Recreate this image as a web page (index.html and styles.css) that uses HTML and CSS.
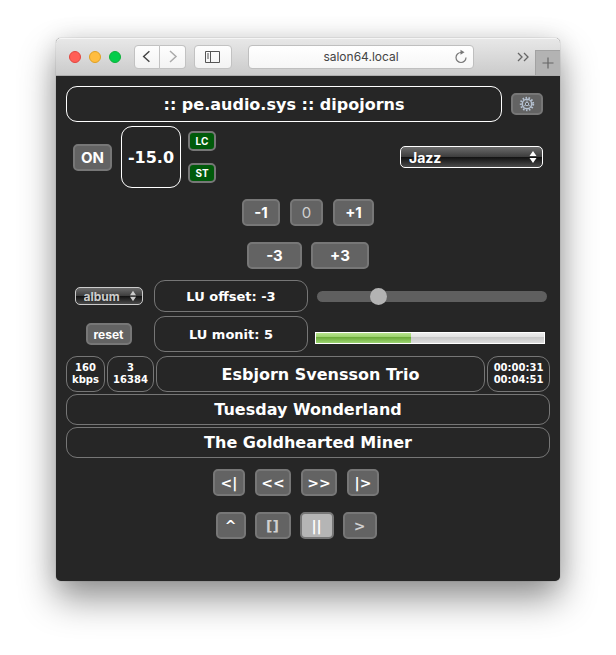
FILE: index.html
```html
<!DOCTYPE html>
<html lang="en">
<head>
<meta charset="utf-8">
<meta name="viewport" content="width=device-width, initial-scale=1">
<title>pe.audio.sys</title>
<link rel="stylesheet" href="styles.css">
</head>
<body>
<div class="window">
  <header class="toolbar">
    <div class="lights">
      <span class="light light-close"></span>
      <span class="light light-min"></span>
      <span class="light light-max"></span>
    </div>
    <div class="nav">
      <button class="chrome-btn nav-back" aria-label="Back"><svg width="25" height="21" viewBox="0 0 25 21"><path d="M15 5l-6 5.500 6 5.500" fill="none" stroke="#444" stroke-width="1.500"/></svg></button>
      <button class="chrome-btn nav-fwd" aria-label="Forward"><svg width="25" height="21" viewBox="0 0 25 21"><path d="M10 5l6 5.500-6 5.500" fill="none" stroke="#aaa" stroke-width="1.500"/></svg></button>
    </div>
    <button class="chrome-btn sidebar-btn" aria-label="Sidebar"><svg width="16" height="12" viewBox="0 0 16 12"><path d="M.5.500h14v11H.5zM5.500.500v11M2 3h2M2 5h2M2 7h2" fill="none" stroke="#555"/></svg></button>
    <div class="address">
      <input class="address-input" type="text" value="salon64.local" aria-label="Address">
      <button class="reload" aria-label="Reload"><svg width="14" height="15" viewBox="0 0 14 15"><path d="M7 3.500A5 5 0 1 0 12 8.500" fill="none" stroke="#777" stroke-width="1.200"/><path d="M6.500.800v5L10.500 3.300z" fill="#777"/></svg></button>
    </div>
    <button class="more" aria-label="More"><svg width="13" height="10" viewBox="0 0 13 10"><path d="M1 1l4 4-4 4M7 1l4 4-4 4" fill="none" stroke="#666" stroke-width="1.300"/></svg></button>
    <button class="new-tab" aria-label="New tab"><svg width="12" height="12" viewBox="0 0 12 12"><path d="M6 .5v11M.5 6h11" stroke="#666" stroke-width="1.200"/></svg></button>
  </header>

  <main class="panel">
    <div class="title-row">
      <h1 class="box title">:: pe.audio.sys :: dipojorns</h1>
      <button class="btn gear" aria-label="Settings"><svg width="16" height="16" viewBox="0 0 16 16"><circle cx="8" cy="8" r="6.200" fill="none" stroke="#b4c0d0" stroke-width="2" stroke-dasharray="1.500 1.500"/><circle cx="8" cy="8" r="4.700" fill="none" stroke="#b4c0d0" stroke-width="1.500"/><circle cx="8" cy="8" r="1.700" fill="#555" stroke="#b4c0d0"/><path d="M8 3.500v3M4.200 10.500l2.500-1.500M11.800 10.500L9.300 9" stroke="#b4c0d0" stroke-width=".8"/></svg></button>
    </div>

    <div class="main-row">
      <button class="btn power">ON</button>
      <div class="box volume">-15.0</div>
      <div class="flags">
        <button class="btn flag">LC</button>
        <button class="btn flag">ST</button>
      </div>
      <div class="select-wrap target">
        <select class="select" aria-label="Preset"><option>Jazz</option></select>
        <svg class="arrows" width="8" height="14" viewBox="0 0 8 14"><path d="M4 1l3.500 5h-7zM4 13L.5 8h7z" fill="#fff"/></svg>
      </div>
    </div>

    <div class="btn-row small-steps">
      <button class="btn w38">-1</button>
      <button class="btn w33 dim zero">0</button>
      <button class="btn w41">+1</button>
    </div>
    <div class="btn-row big-steps">
      <button class="btn w55">-3</button>
      <button class="btn w58">+3</button>
    </div>

    <div class="loudness">
      <div class="select-wrap scope">
        <select class="select" aria-label="Loudness scope"><option>album</option></select>
        <svg class="arrows" width="8" height="12" viewBox="0 0 8 14"><path d="M4 1l3.500 5h-7zM4 13L.5 8h7z" fill="#ccc"/></svg>
      </div>
      <label class="box lu" for="offset">LU offset: -3</label>
      <input class="slider" id="offset" type="range" min="0" max="12" value="3">
      <button class="btn reset">reset</button>
      <div class="box lu lu-monit">LU monit: 5</div>
      <div class="meter" role="meter" aria-label="LU monit" aria-valuemin="0" aria-valuemax="12" aria-valuenow="5"><div class="meter-fill" style="width: 41.6%"></div></div>
    </div>

    <div class="track">
      <div class="box info">160<br>kbps</div>
      <div class="box info">3<br>16384</div>
      <div class="box artist">Esbjorn Svensson Trio</div>
      <div class="box info">00:00:31<br>00:04:51</div>
      <div class="box wide">Tuesday Wonderland</div>
      <div class="box wide">The Goldhearted Miner</div>
    </div>

    <div class="btn-row transport">
      <button class="btn glyph w32">&lt;|</button>
      <button class="btn glyph w36">&lt;&lt;</button>
      <button class="btn glyph w36">&gt;&gt;</button>
      <button class="btn glyph w32">|&gt;</button>
    </div>
    <div class="btn-row transport transport-modes">
      <button class="btn glyph w30">^</button>
      <button class="btn glyph w36 dim">[]</button>
      <button class="btn glyph w34 active">||</button>
      <button class="btn glyph w34 dim">&gt;</button>
    </div>
  </main>
</div>
</body>
</html>
```
FILE: styles.css
```css
* {
  box-sizing: border-box;
}

body {
  margin: 0;
  padding: 38px 56px 74px;
  background: #fff;
  color: #fff;
  font-family: "DejaVu Sans", Verdana, sans-serif;
  font-weight: bold;
}

button,
input,
select {
  margin: 0;
  padding: 0;
  font: inherit;
}

svg {
  display: block;
}

.window {
  border-radius: 5px;
  background: #262626;
  box-shadow: 0 0 1px rgba(0, 0, 0, 0.5), 0 18px 36px rgba(0, 0, 0, 0.42), 0 0 24px rgba(0, 0, 0, 0.1);
}

/* Browser toolbar */
.toolbar {
  display: flex;
  align-items: center;
  height: 38px;
  padding-left: 13px;
  border-bottom: 1px solid #adadad;
  border-radius: 5px 5px 0 0;
  background: linear-gradient(#e8e8e8, #cbcbcb);
  box-shadow: inset 0 1px #f5f5f5;
}

.lights {
  display: flex;
  gap: 8px;
}

.light {
  width: 12px;
  height: 12px;
  border: 1px solid #e2463f;
  border-radius: 50%;
  background: #ff5f57;
}

.light-min {
  border-color: #dfa023;
  background: #ffbd3f;
}

.light-max {
  border-color: #0eb03a;
  background: #04cd4b;
}

.nav {
  display: flex;
  margin-left: 13px;
}

.chrome-btn {
  display: flex;
  flex: none;
  align-items: center;
  justify-content: center;
  height: 24px;
  border: 1px solid #c2c2c2;
  border-radius: 4px;
  background: linear-gradient(#fefefe, #f3f3f3);
}

.nav-back {
  width: 26px;
  border-radius: 4px 0 0 4px;
}

.nav-fwd {
  width: 26px;
  border-left: 0;
  border-radius: 0 4px 4px 0;
}

.sidebar-btn {
  width: 38px;
  margin-left: 8px;
}

.address {
  display: flex;
  flex: 1 1 0;
  align-items: center;
  min-width: 0;
  height: 24px;
  margin-left: 16px;
  padding: 0 5px 0 19px;
  border: 1px solid #bfbfbf;
  border-radius: 4px;
  background: linear-gradient(#fff, #f6f6f6);
}

.address-input {
  flex: 1;
  min-width: 0;
  border: 0;
  background: none;
  color: #444;
  font: 12px Inter, sans-serif;
  text-align: center;
}

.reload,
.more {
  flex: none;
  border: 0;
  background: none;
}

.more {
  margin: 0 5px 0 43px;
}

.new-tab {
  display: flex;
  flex: none;
  align-self: flex-end;
  align-items: center;
  justify-content: center;
  width: 25px;
  height: 25px;
  border: 1px solid #a2a2a2;
  border-width: 1px 0 0 1px;
  background: #b3b3b3;
}

/* Control panel */
.panel {
  padding: 10px 10px 42px;
}

.box {
  display: flex;
  align-items: center;
  justify-content: center;
  margin: 0;
  border: 1px solid #767676;
  border-radius: 11px;
  text-align: center;
}

.btn {
  display: flex;
  align-items: center;
  justify-content: center;
  height: 27px;
  border: 2px solid #777;
  border-radius: 5px;
  background: #636363;
  color: #fff;
  font: bold 15px Inter, sans-serif;
}

.title-row {
  display: flex;
  align-items: center;
  gap: 9px;
  padding-right: 7px;
}

.title {
  flex: 1;
  height: 36px;
  border-color: #fff;
  font-size: 16px;
}

.gear {
  width: 32px;
  height: 22px;
}

.main-row {
  display: flex;
  align-items: center;
  margin-top: 4px;
  padding: 0 7px;
}

.power {
  width: 39px;
}

.volume {
  width: 60px;
  height: 62px;
  margin: 0 7px 0 9px;
  border-color: #fff;
  font-size: 16px;
}

.flags {
  display: flex;
  flex-direction: column;
  gap: 12px;
}

.flag {
  width: 28px;
  height: 20px;
  background: #005a0a;
  font-size: 10px;
}

.select-wrap {
  position: relative;
}

.select {
  display: block;
  width: 100%;
  height: 22px;
  padding-left: 8px;
  border: 1px solid #fff;
  border-radius: 5px;
  appearance: none;
  background: linear-gradient(#6b6b6b, #3c3c3c 50%, #111 50%, #4a4a4a);
  color: #fff;
  font: bold 14px Inter, sans-serif;
}

.arrows {
  position: absolute;
  top: 4px;
  right: 6px;
  pointer-events: none;
}

.target {
  width: 143px;
  margin-left: auto;
}

.btn-row {
  display: flex;
  justify-content: center;
  gap: 10px;
}

.small-steps {
  margin-top: 11px;
}

.big-steps {
  gap: 9px;
  margin-top: 16px;
}

.w30 { width: 30px; }
.w32 { width: 32px; }
.w33 { width: 33px; }
.w34 { width: 34px; }
.w36 { width: 36px; }
.w38 { width: 38px; }
.w41 { width: 41px; }
.w55 { width: 55px; }
.w58 { width: 58px; }

.dim {
  color: #d0d0d0;
}

.zero {
  font-weight: normal;
}

.loudness {
  display: grid;
  grid-template-columns: 85px 154px 1fr;
  align-items: center;
  gap: 4px 3px;
  margin-top: 11px;
}

.scope {
  width: 68px;
  justify-self: center;
}

.scope .select {
  height: 18px;
  border-color: #ccc;
  color: #ccc;
  font-size: 12px;
}

.scope .arrows {
  top: 3px;
}

.lu {
  height: 32px;
  font-size: 13px;
}

.lu-monit {
  height: 36px;
}

.slider {
  height: 17px;
  margin: 0 3px 0 6px;
  appearance: none;
  background: none;
}

.slider::-webkit-slider-runnable-track {
  height: 11px;
  border-radius: 6px;
  background: #5f5f5f;
}

.slider::-webkit-slider-thumb {
  width: 17px;
  height: 17px;
  margin-top: -3px;
  border-radius: 50%;
  appearance: none;
  background: #b3b3b3;
}

.reset {
  justify-self: center;
  width: 46px;
  height: 22px;
  font-size: 12px;
}

.meter {
  align-self: end;
  height: 12px;
  margin: 0 5px 8px 4px;
  border: 1px solid #fff;
  background: linear-gradient(#eee, #e2e2e2 40%, #c8c8c8 40%, #dcdcdc);
}

.meter-fill {
  height: 100%;
  background: linear-gradient(#b7e38d, #9bd16c 40%, #6aa838 40%, #9bd470);
}

.track {
  display: grid;
  grid-template-columns: 39px 47px 1fr 63px;
  gap: 2px;
  margin-top: 4px;
}

.info {
  height: 36px;
  font-size: 10px;
  line-height: 12px;
}

.artist,
.wide {
  font-size: 16px;
}

.wide {
  grid-column: 1 / -1;
  height: 31px;
}

.transport {
  margin-top: 11px;
  padding-right: 24px;
}

.transport-modes {
  gap: 9px;
  margin-top: 16px;
}

.glyph {
  font-family: "DejaVu Sans", sans-serif;
  font-size: 14px;
}

.active {
  background: #b5b5b5;
}
```
